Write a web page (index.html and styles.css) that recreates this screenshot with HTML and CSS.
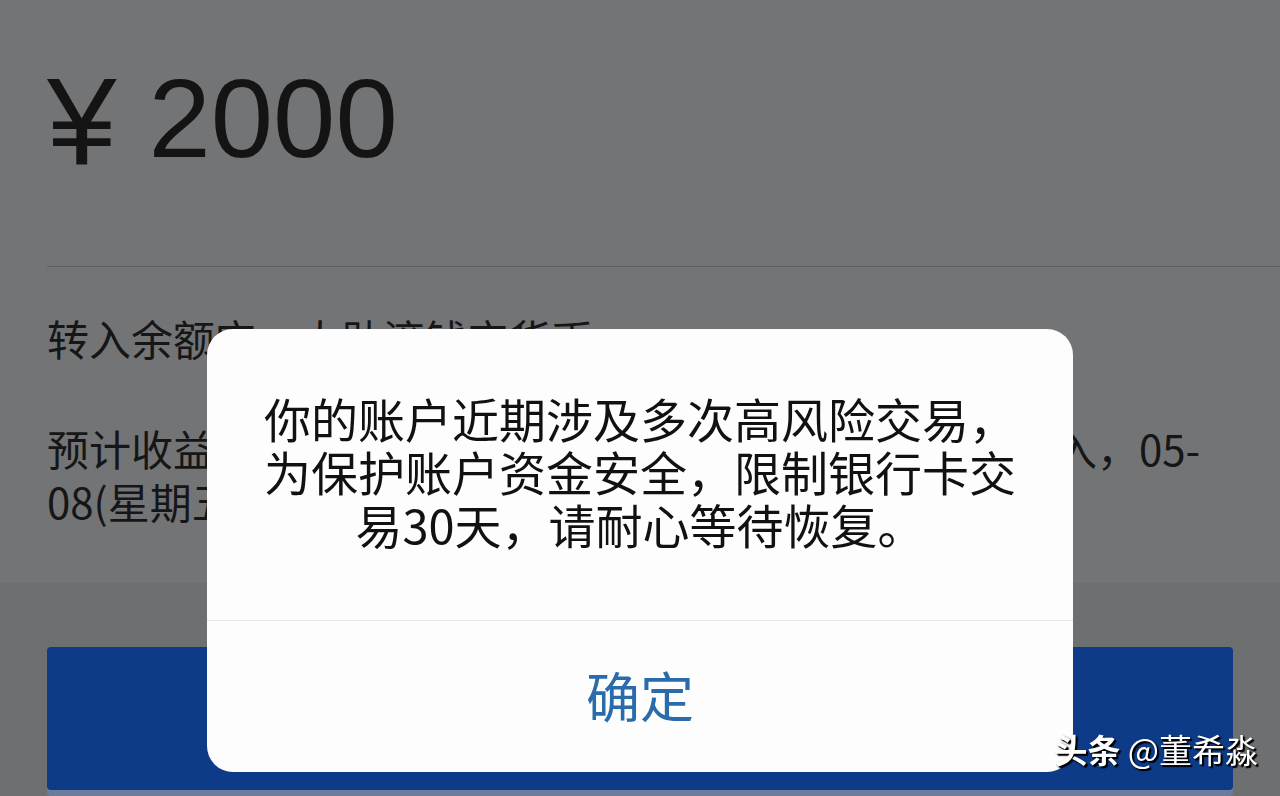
FILE: index.html
```html
<!DOCTYPE html>
<html lang="zh-CN">
<head>
  <meta charset="UTF-8" />
  <meta name="viewport" content="width=device-width, initial-scale=1.0"/>
  <title>转入余额宝</title>
  <link rel="stylesheet" href="styles.css">
</head>
<body>

  <div class="page">
    <section class="sheet">
      <div class="amount"><span class="yen">¥</span>2000</div>
      <div class="info">
        <p>转入余额宝，大助滚钱宝货币…</p>
        <p class="eta">预计收益将于份额确认后的第二个交易日开始计算并计入，05-08(星期五)可查看收益到账情况。</p>
      </div>
    </section>

    <div class="actions">
      <button class="btn-main" aria-label="确认转入"></button>
    </div>
  </div>

  <!-- Alert -->
  <div class="mask">
    <div class="dialog">
      <p class="dialog-msg">你的账户近期涉及多次高风险交易，为保护账户资金安全，限制银行卡交易30天，请耐心等待恢复。</p>
      <button class="dialog-btn">确定</button>
    </div>
  </div>

  <div class="watermark"><b>头条</b> @董希淼</div>

</body>
</html>
```

FILE: styles.css
```css
* {
  box-sizing: border-box;
}
html, body {
  margin: 0;
  padding: 0;
  height: 100%;
  overflow: hidden;
  font-family: "Noto Sans CJK SC", "Noto Sans", sans-serif;
  background-color: #6e6f71;
}
p {
  margin: 0;
}

.sheet {
  background-color: #737476;
  height: 583px;
  padding-left: 47px;
}
.amount {
  padding-top: 63px;
  color: #141414;
  font-family: "Liberation Sans", Arial, sans-serif;
  font-size: 112px;
  line-height: 112px;
  height: 175px;
}
.amount .yen {
  font-size: 125px;
  line-height: 0;
  vertical-align: -7px;
  margin-right: 32px;
}
.info {
  margin-top: 91px;
  border-top: 1px solid #5d5e60;
  padding-top: 44px;
  font-size: 42px;
  line-height: 53px;
  color: #161616;
  padding-right: 47px;
}
.info .eta {
  margin-top: 57px;
}

.actions {
  padding: 64px 47px 0;
}
.btn-main {
  display: block;
  width: 100%;
  height: 143px;
  border: none;
  border-radius: 4px;
  background-color: #0d3b87;
  box-shadow: 0 6px 0 #6c7d9b;
}

/* Alert Styles */
.mask {
  position: fixed;
  top: 0;
  left: 0;
  width: 100vw;
  height: 100vh;
  display: flex;
  justify-content: center;
  align-items: flex-start;
  padding-top: 329px;
}
.dialog {
  width: 866px;
  background-color: #fdfdfd;
  border-radius: 26px;
  overflow: hidden;
}
.dialog-msg {
  padding: 62px 53px 70px;
  text-align: center;
  font-size: 47px;
  line-height: 53px;
  color: #111;
}
.dialog-btn {
  display: block;
  width: 100%;
  height: 152px;
  padding-bottom: 6px;
  border: none;
  border-top: 1px solid #e4e5e7;
  background: none;
  color: #2a6cab;
  font-family: inherit;
  font-size: 54px;
}

.watermark {
  position: fixed;
  right: 22px;
  bottom: 26px;
  color: #fff;
  font-size: 33px;
  line-height: 1.2;
  text-shadow: 2px 2px 1px #000, 1px 1px 2px #000;
}
.watermark b {
  font-weight: 700;
}
```
